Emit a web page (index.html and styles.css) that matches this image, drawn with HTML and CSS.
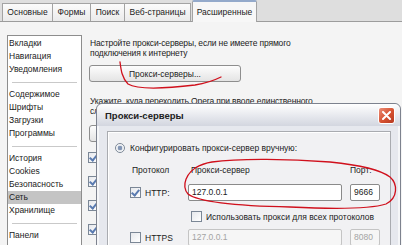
FILE: index.html
```html
<!DOCTYPE html>
<html>
<head>
    <title>Настройки</title>
    <link rel="stylesheet" href="styles.css">
</head>
<body>
    <div class="tabs">
        <span class="tab tab-main">Основные</span>
        <span class="tab tab-forms">Формы</span>
        <span class="tab tab-search">Поиск</span>
        <span class="tab tab-web">Веб-страницы</span>
        <span class="tab tab-adv active">Расширенные</span>
    </div>

    <div class="page">
        <ul class="sidebar">
            <li>Вкладки</li>
            <li>Навигация</li>
            <li>Уведомления</li>
            <li class="sep"></li>
            <li>Содержимое</li>
            <li>Шрифты</li>
            <li>Загрузки</li>
            <li>Программы</li>
            <li class="sep"></li>
            <li>История</li>
            <li>Cookies</li>
            <li>Безопасность</li>
            <li class="selected">Сеть</li>
            <li>Хранилище</li>
            <li class="sep"></li>
            <li>Панели</li>
        </ul>

        <div class="main">
            <p class="intro">Настройте прокси-серверы, если не имеете прямого<br>подключения к интернету</p>
            <button class="btn">Прокси-серверы...</button>
            <!-- the rest of the second line is hidden under the dialog -->
            <p class="hint">Укажите, куда переходить Opera при вводе единственного<br>сл</p>
            <button class="btn">Имена серверов...</button>
            <div class="checks">
                <span class="check on"></span>
                <span class="check on"></span>
                <span class="check on"></span>
                <span class="check on"></span>
                <span class="check"></span>
            </div>
        </div>
    </div>

    <!-- dialog window over the settings page -->
    <div class="dialog">
        <div class="titlebar">
            <span class="title">Прокси-серверы</span>
            <span class="close">
                <svg width="9" height="9" viewBox="0 0 9 9"><path d="M1 1 L8 8 M8 1 L1 8" stroke="#fff" stroke-width="2" stroke-linecap="round"/></svg>
            </span>
        </div>
        <div class="dialog-body">
            <div class="group">
                <div class="radio-row">
                    <span class="radio"></span>
                    <span>Конфигурировать прокси-сервер вручную:</span>
                </div>
                <div class="grid-row head">
                    <span class="col-proto">Протокол</span>
                    <span class="col-host">Прокси-сервер</span>
                    <span class="col-port">Порт:</span>
                </div>
                <div class="grid-row inputs">
                    <label class="col-proto"><span class="check on small"></span>HTTP:</label>
                    <span class="field">127.0.0.1</span>
                    <span class="field port">9666</span>
                </div>
                <div class="all-row">
                    <span class="check small"></span>
                    <span>Использовать прокси для всех протоколов</span>
                </div>
                <div class="grid-row inputs">
                    <label class="col-proto"><span class="check small"></span>HTTPS</label>
                    <span class="field disabled">127.0.0.1</span>
                    <span class="field port disabled">8080</span>
                </div>
            </div>
        </div>
    </div>

    <svg class="marks" width="402" height="245" viewBox="0 0 402 245">
        <path d="M120 62 C121 70, 122 78, 128 84 C138 90, 170 88, 195 85 C208 83, 215 80, 221 77"/>
        <path d="M199 166 C186 172, 181 186, 188 194 C200 203, 240 206, 290 207 C330 209, 370 209, 386 204 C398 198, 398 184, 390 177 C378 168, 350 164, 330 162 C290 159, 240 158, 212 162 C205 163, 200 165, 195 168"/>
    </svg>
</body>
</html>
```

FILE: styles.css
```css
body {
    margin: 0;
    width: 402px;
    height: 245px;
    overflow: hidden;
    position: relative;
    background-color: #f4f4f4;
    font-family: "Liberation Sans", Arial, sans-serif;
    font-size: 8.5px;
    color: #1b1b1b;
}

.tabs {
    display: flex;
    align-items: flex-end;
    height: 21px;
    padding-left: 2px;
    background-color: #dedede;
    border-bottom: 1px solid #9c9c9c;
}

.tab {
    box-sizing: border-box;
    height: 18px;
    line-height: 17px;
    text-align: center;
    border: 1px solid #a3a3a3;
    border-bottom: none;
    margin-right: -1px;
    background: linear-gradient(#fbfbfb, #ebebeb);
}

.tab-main { width: 51px; }
.tab-forms { width: 39px; }
.tab-search { width: 35px; }
.tab-web { width: 67px; }

.tab.active {
    width: 65px;
    height: 22px;
    line-height: 21px;
    margin-left: 2px;
    margin-bottom: -1px;
    background: #f7f7f7;
    border-top: 2px solid #94aacb;
    border-radius: 2px 2px 0 0;
}

.page {
    display: flex;
}

.sidebar {
    list-style: none;
    margin: 13px 0 0 7px;
    padding: 1px 0 0 0;
    width: 73px;
    height: 230px;
    background-color: #fff;
    border: 1px solid #8d8d8d;
}

.sidebar li {
    height: 13px;
    line-height: 13px;
    padding-left: 1px;
}

.sidebar li.sep {
    height: 12px;
    margin: 0 4px;
    background: linear-gradient(transparent 6px, #c9c9c9 6px, #c9c9c9 7px, transparent 7px);
}

.sidebar li.selected {
    background-color: #c4c4c4;
}

.main {
    padding-left: 7px;
    display: flex;
    flex-direction: column;
    align-items: flex-start;
}

.intro,
.hint {
    margin: 0;
    padding-left: 1px;
    line-height: 10px;
    letter-spacing: -0.15px;
    white-space: nowrap;
}

.intro {
    margin-top: 16px;
}

.hint {
    margin-top: 14px;
}

.btn {
    width: 152px;
    height: 17px;
    margin-top: 7px;
    padding: 0;
    font: inherit;
    color: #1b1b1b;
    border: 1px solid #8e8e8e;
    border-radius: 3px;
    background: linear-gradient(#fdfdfd, #e4e4e4);
}

.hint + .btn {
    margin-top: 9px;
}

.checks {
    display: flex;
    flex-direction: column;
    gap: 13px;
    margin-top: 10px;
    margin-left: -1px;
}

.check {
    display: inline-block;
    position: relative;
    width: 9px;
    height: 9px;
    border: 1px solid #7b8796;
    background: linear-gradient(135deg, #e6e8ec, #ffffff);
}

.check.on::after {
    content: "";
    position: absolute;
    left: 2px;
    top: 0;
    width: 3px;
    height: 6px;
    border: solid #5a7bb0;
    border-width: 0 2px 2px 0;
    transform: rotate(40deg);
}

/* dialog */
.dialog {
    position: absolute;
    left: 96px;
    top: 103px;
    width: 303px;
    height: 160px;
    background-color: #e6e8ee;
    border: 1px solid #7d828e;
    border-radius: 6px 6px 0 0;
    box-shadow: inset 0 0 0 2px #f5f6f8;
}

.titlebar {
    display: flex;
    align-items: center;
    justify-content: space-between;
    height: 22px;
    padding: 0 5px 0 8px;
    border-radius: 6px 6px 0 0;
    background: linear-gradient(#ffffff, #e4e6ec 60%, #d3d6df);
}

.title {
    font-size: 9.5px;
    font-weight: bold;
    color: #222;
}

.close {
    display: flex;
    align-items: center;
    justify-content: center;
    width: 15px;
    height: 15px;
    border: 1px solid #fff;
    border-radius: 3px;
    background: linear-gradient(135deg, #eb8f7a, #d6502f 55%, #b53a22);
}

.dialog-body {
    padding: 5px 9px 0 10px;
}

.group {
    height: 130px;
    padding: 11px 0 0 7px;
    border: 1px solid #a9abb0;
    background-color: #f1f1f3;
    box-shadow: inset 1px 1px 0 #fff;
}

.radio-row {
    display: flex;
    align-items: center;
    gap: 5px;
    height: 10px;
}

.radio {
    width: 8px;
    height: 8px;
    border: 1px solid #7b8796;
    border-radius: 50%;
    background: radial-gradient(circle, #8396b5 0 2px, #dfe3ea 2.5px, #fff 4px);
}

.grid-row {
    display: grid;
    grid-template-columns: 58px 162px 30px;
    margin-left: 15px;
}

.grid-row.head {
    height: 13px;
    line-height: 13px;
    margin-top: 11px;
}

.head .col-proto {
    padding-left: 2px;
}

.head .col-host {
    padding-left: 3px;
}

.grid-row.inputs {
    margin-top: 7px;
    align-items: center;
}

.grid-row.inputs + .all-row {
    margin-top: 10px;
}

.all-row + .grid-row {
    margin-top: 7px;
}

.col-proto {
    display: flex;
    align-items: center;
    gap: 4px;
}

.check.small {
    width: 9px;
    height: 9px;
}

.field {
    box-sizing: border-box;
    width: 154px;
    height: 17px;
    line-height: 15px;
    padding-left: 3px;
    border: 1px solid #8a8a8a;
    border-radius: 2px;
    background-color: #fff;
}

.field.port {
    width: 30px;
}

.field.disabled {
    color: #a4a4a4;
    border-color: #c4c4c4;
    background-color: #f6f6f6;
}

.all-row {
    display: flex;
    align-items: center;
    gap: 4px;
    margin-left: 76px;
    height: 11px;
}

.marks {
    position: absolute;
    left: 0;
    top: 0;
    pointer-events: none;
}

.marks path {
    fill: none;
    stroke: #d0101c;
    stroke-width: 1.3;
    stroke-linecap: round;
}
```
